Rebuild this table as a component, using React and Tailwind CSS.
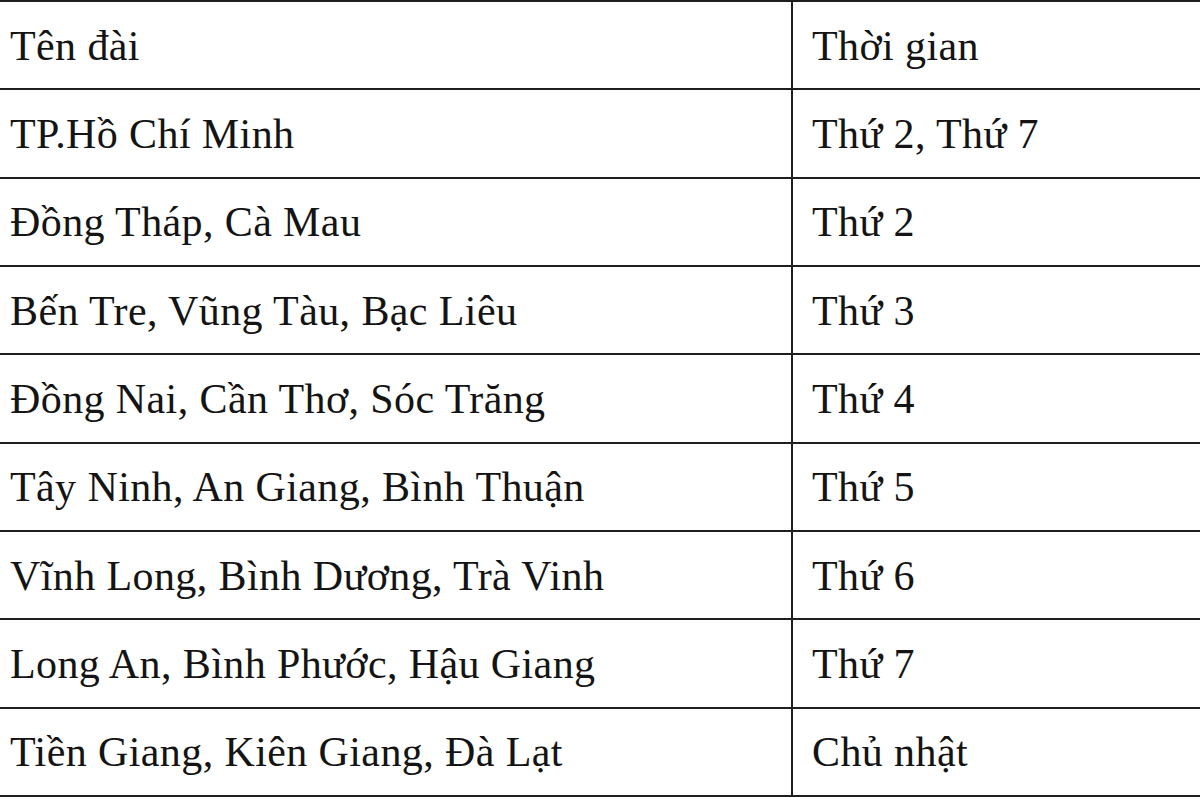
import React from 'react';

const rows = [
    ['Tên đài', 'Thời gian'],
    ['TP.Hồ Chí Minh', 'Thứ 2, Thứ 7'],
    ['Đồng Tháp, Cà Mau', 'Thứ 2'],
    ['Bến Tre, Vũng Tàu, Bạc Liêu', 'Thứ 3'],
    ['Đồng Nai, Cần Thơ, Sóc Trăng', 'Thứ 4'],
    ['Tây Ninh, An Giang, Bình Thuận', 'Thứ 5'],
    ['Vĩnh Long, Bình Dương, Trà Vinh', 'Thứ 6'],
    ['Long An, Bình Phước, Hậu Giang', 'Thứ 7'],
    ['Tiền Giang, Kiên Giang, Đà Lạt', 'Chủ nhật'],
];

export default function App() {
    return (
        <div className="w-[1200px] h-[800px] bg-white overflow-hidden">
            <div
                className="border-t-2 border-[#1e1e1e] text-[#141414] text-[42px] tracking-[0.4px]"
                style={{ fontFamily: '"Liberation Serif", "Times New Roman", serif' }}
            >
                {rows.map(([name, time]) => (
                    <div key={name} className="flex h-[88.33px] border-b-2 border-[#1e1e1e]">
                        <div className="w-[793px] shrink-0 flex items-center pl-[10px] pt-[2px] border-r-2 border-[#1e1e1e] whitespace-nowrap">
                            {name}
                        </div>
                        <div className="flex-1 flex items-center pl-[19px] pt-[2px] whitespace-nowrap">
                            {time}
                        </div>
                    </div>
                ))}
            </div>
        </div>
    );
}
